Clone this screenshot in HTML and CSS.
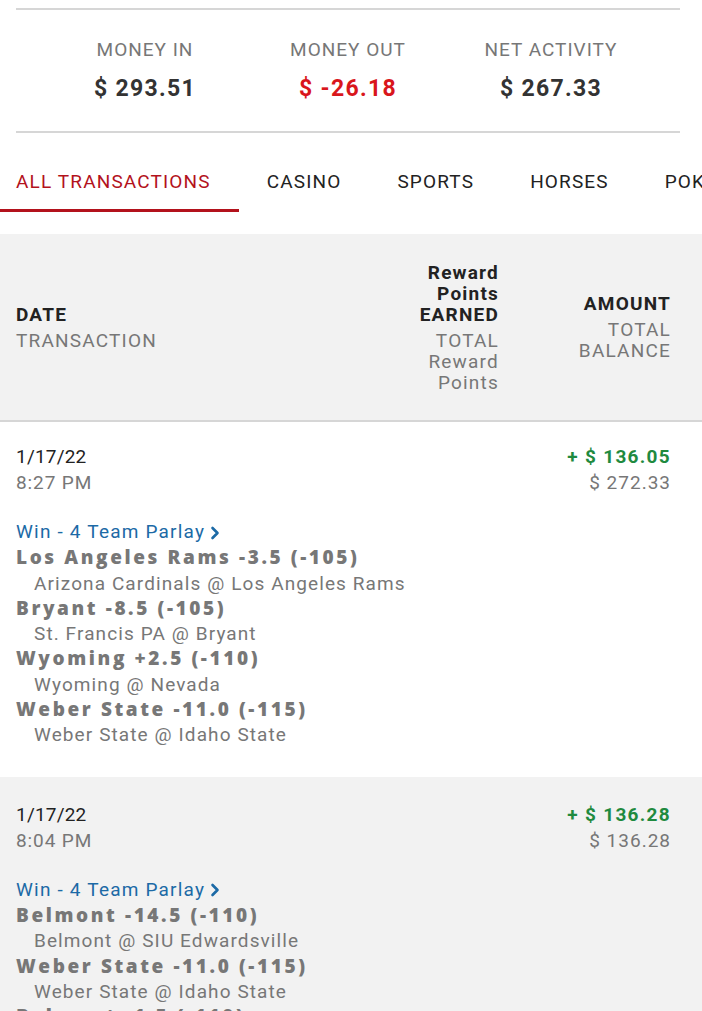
FILE: index.html
```html
<!DOCTYPE html>
<html>
<head>
<meta charset="utf-8">
<link rel="stylesheet" href="styles.css">
</head>
<body>
<div class="page">
  <div class="summary">
    <div class="sum-item">
      <div class="sum-label">MONEY IN</div>
      <div class="sum-value">$ 293.51</div>
    </div>
    <div class="sum-item">
      <div class="sum-label">MONEY OUT</div>
      <div class="sum-value neg">$ -26.18</div>
    </div>
    <div class="sum-item">
      <div class="sum-label">NET ACTIVITY</div>
      <div class="sum-value">$ 267.33</div>
    </div>
  </div>

  <div class="tabs">
    <div class="tab active">ALL TRANSACTIONS</div>
    <div class="tab">CASINO</div>
    <div class="tab">SPORTS</div>
    <div class="tab">HORSES</div>
    <div class="tab">POKER</div>
  </div>

  <div class="thead">
    <div class="th th-date">
      <div class="th-main">DATE</div>
      <div class="th-sub">TRANSACTION</div>
    </div>
    <div class="th th-points">
      <div class="th-main">Reward<br>Points<br>EARNED</div>
      <div class="th-sub">TOTAL<br>Reward<br>Points</div>
    </div>
    <div class="th th-amount">
      <div class="th-main">AMOUNT</div>
      <div class="th-sub">TOTAL<br>BALANCE</div>
    </div>
  </div>

  <div class="row">
    <div class="row-top">
      <div class="when">
        <div class="date">1/17/22</div>
        <div class="time">8:27 PM</div>
      </div>
      <div class="money">
        <div class="amt">+ $ 136.05</div>
        <div class="bal">$ 272.33</div>
      </div>
    </div>
    <div class="detail">
      <div class="link">Win - 4 Team Parlay <svg class="chev" width="10" height="14" viewBox="0 0 10 14"><path d="M2.5 2 L7.5 7 L2.5 12" fill="none" stroke="currentColor" stroke-width="2.6" stroke-linecap="round" stroke-linejoin="round"/></svg></div>
      <div class="leg">Los Angeles Rams -3.5 (-105)</div>
      <div class="game">Arizona Cardinals @ Los Angeles Rams</div>
      <div class="leg">Bryant -8.5 (-105)</div>
      <div class="game">St. Francis PA @ Bryant</div>
      <div class="leg">Wyoming +2.5 (-110)</div>
      <div class="game">Wyoming @ Nevada</div>
      <div class="leg">Weber State -11.0 (-115)</div>
      <div class="game">Weber State @ Idaho State</div>
    </div>
  </div>

  <div class="row alt">
    <div class="row-top">
      <div class="when">
        <div class="date">1/17/22</div>
        <div class="time">8:04 PM</div>
      </div>
      <div class="money">
        <div class="amt">+ $ 136.28</div>
        <div class="bal">$ 136.28</div>
      </div>
    </div>
    <div class="detail">
      <div class="link">Win - 4 Team Parlay <svg class="chev" width="10" height="14" viewBox="0 0 10 14"><path d="M2.5 2 L7.5 7 L2.5 12" fill="none" stroke="currentColor" stroke-width="2.6" stroke-linecap="round" stroke-linejoin="round"/></svg></div>
      <div class="leg">Belmont -14.5 (-110)</div>
      <div class="game">Belmont @ SIU Edwardsville</div>
      <div class="leg">Weber State -11.0 (-115)</div>
      <div class="game">Weber State @ Idaho State</div>
      <div class="leg">Belmont -1.5 (-110)</div>
      <div class="game">Belmont @ SIU Edwardsville</div>
    </div>
  </div>
</div>
</body>
</html>
```

FILE: styles.css
```css
* { box-sizing: border-box; }
html, body { margin: 0; padding: 0; background: #fff; }
body {
  font-family: Roboto, "Liberation Sans", sans-serif;
  color: #333;
  overflow: hidden;
}
.page { width: 702px; height: 1011px; overflow: hidden; }

.summary {
  margin: 8px 22px 0 16px;
  border-top: 2px solid #d6d6d6;
  border-bottom: 2px solid #d6d6d6;
  display: grid;
  grid-template-columns: repeat(3, 203px);
  justify-content: center;
  padding: 26px 0 27px;
}
.sum-item { text-align: center; }
.sum-label { font-size: 19px; color: #777; line-height: 28px; letter-spacing: 1px; }
.sum-value { font-size: 23px; font-weight: 700; color: #333; line-height: 30px; margin-top: 10px; letter-spacing: 1.3px; }
.sum-value.neg { color: #d9161c; }

.tabs {
  display: flex;
  white-space: nowrap;
  overflow: hidden;
  margin-top: 26px;
}
.tab {
  font-size: 19px;
  color: #222;
  padding: 11px 28px 15px;
  border-bottom: 3px solid transparent;
  line-height: 24px;
  letter-spacing: 1.15px;
}
.tab.active {
  color: #b3121c;
  padding-left: 16px;
  border-bottom-color: #b3121c;
}

.thead {
  margin-top: 22px;
  background: #f2f2f2;
  border-bottom: 2px solid #d6d6d6;
  height: 188px;
  display: flex;
  align-items: center;
  padding: 0 31px 0 16px;
}
.th { font-size: 19px; line-height: 21px; letter-spacing: 1.2px; }
.th-main { font-weight: 700; color: #222; }
.th-sub { color: #777; margin-top: 5px; }
.th-date { flex: 1; }
.th-points { text-align: right; }
.th-amount { text-align: right; width: 172px; }

.row {
  padding: 22px 31px 29px 16px;
  font-size: 19px;
  line-height: 25.3px;
  letter-spacing: 1.1px;
}
.row.alt { background: #f2f2f2; padding-top: 25px; }
.row-top { display: flex; justify-content: space-between; }
.date { color: #222; line-height: 26px; letter-spacing: 0.2px; }
.time { color: #777; line-height: 26px; letter-spacing: 0.9px; }
.money { text-align: right; }
.amt { color: #1f8a3f; font-weight: 700; line-height: 26px; letter-spacing: 1.3px; }
.bal { color: #777; line-height: 26px; letter-spacing: 1px; }

.detail { margin-top: 23px; }
.link { color: #1c6aa6; display: flex; align-items: center; gap: 5px; letter-spacing: 1.2px; margin-bottom: 1px; }
.chev { display: block; margin-top: 2px; }
.leg { color: #777; font-family: "Open Sans", Roboto, sans-serif; font-weight: 800; letter-spacing: 2.6px; }
.game { color: #777; padding-left: 18px; letter-spacing: 1.1px; }
```
